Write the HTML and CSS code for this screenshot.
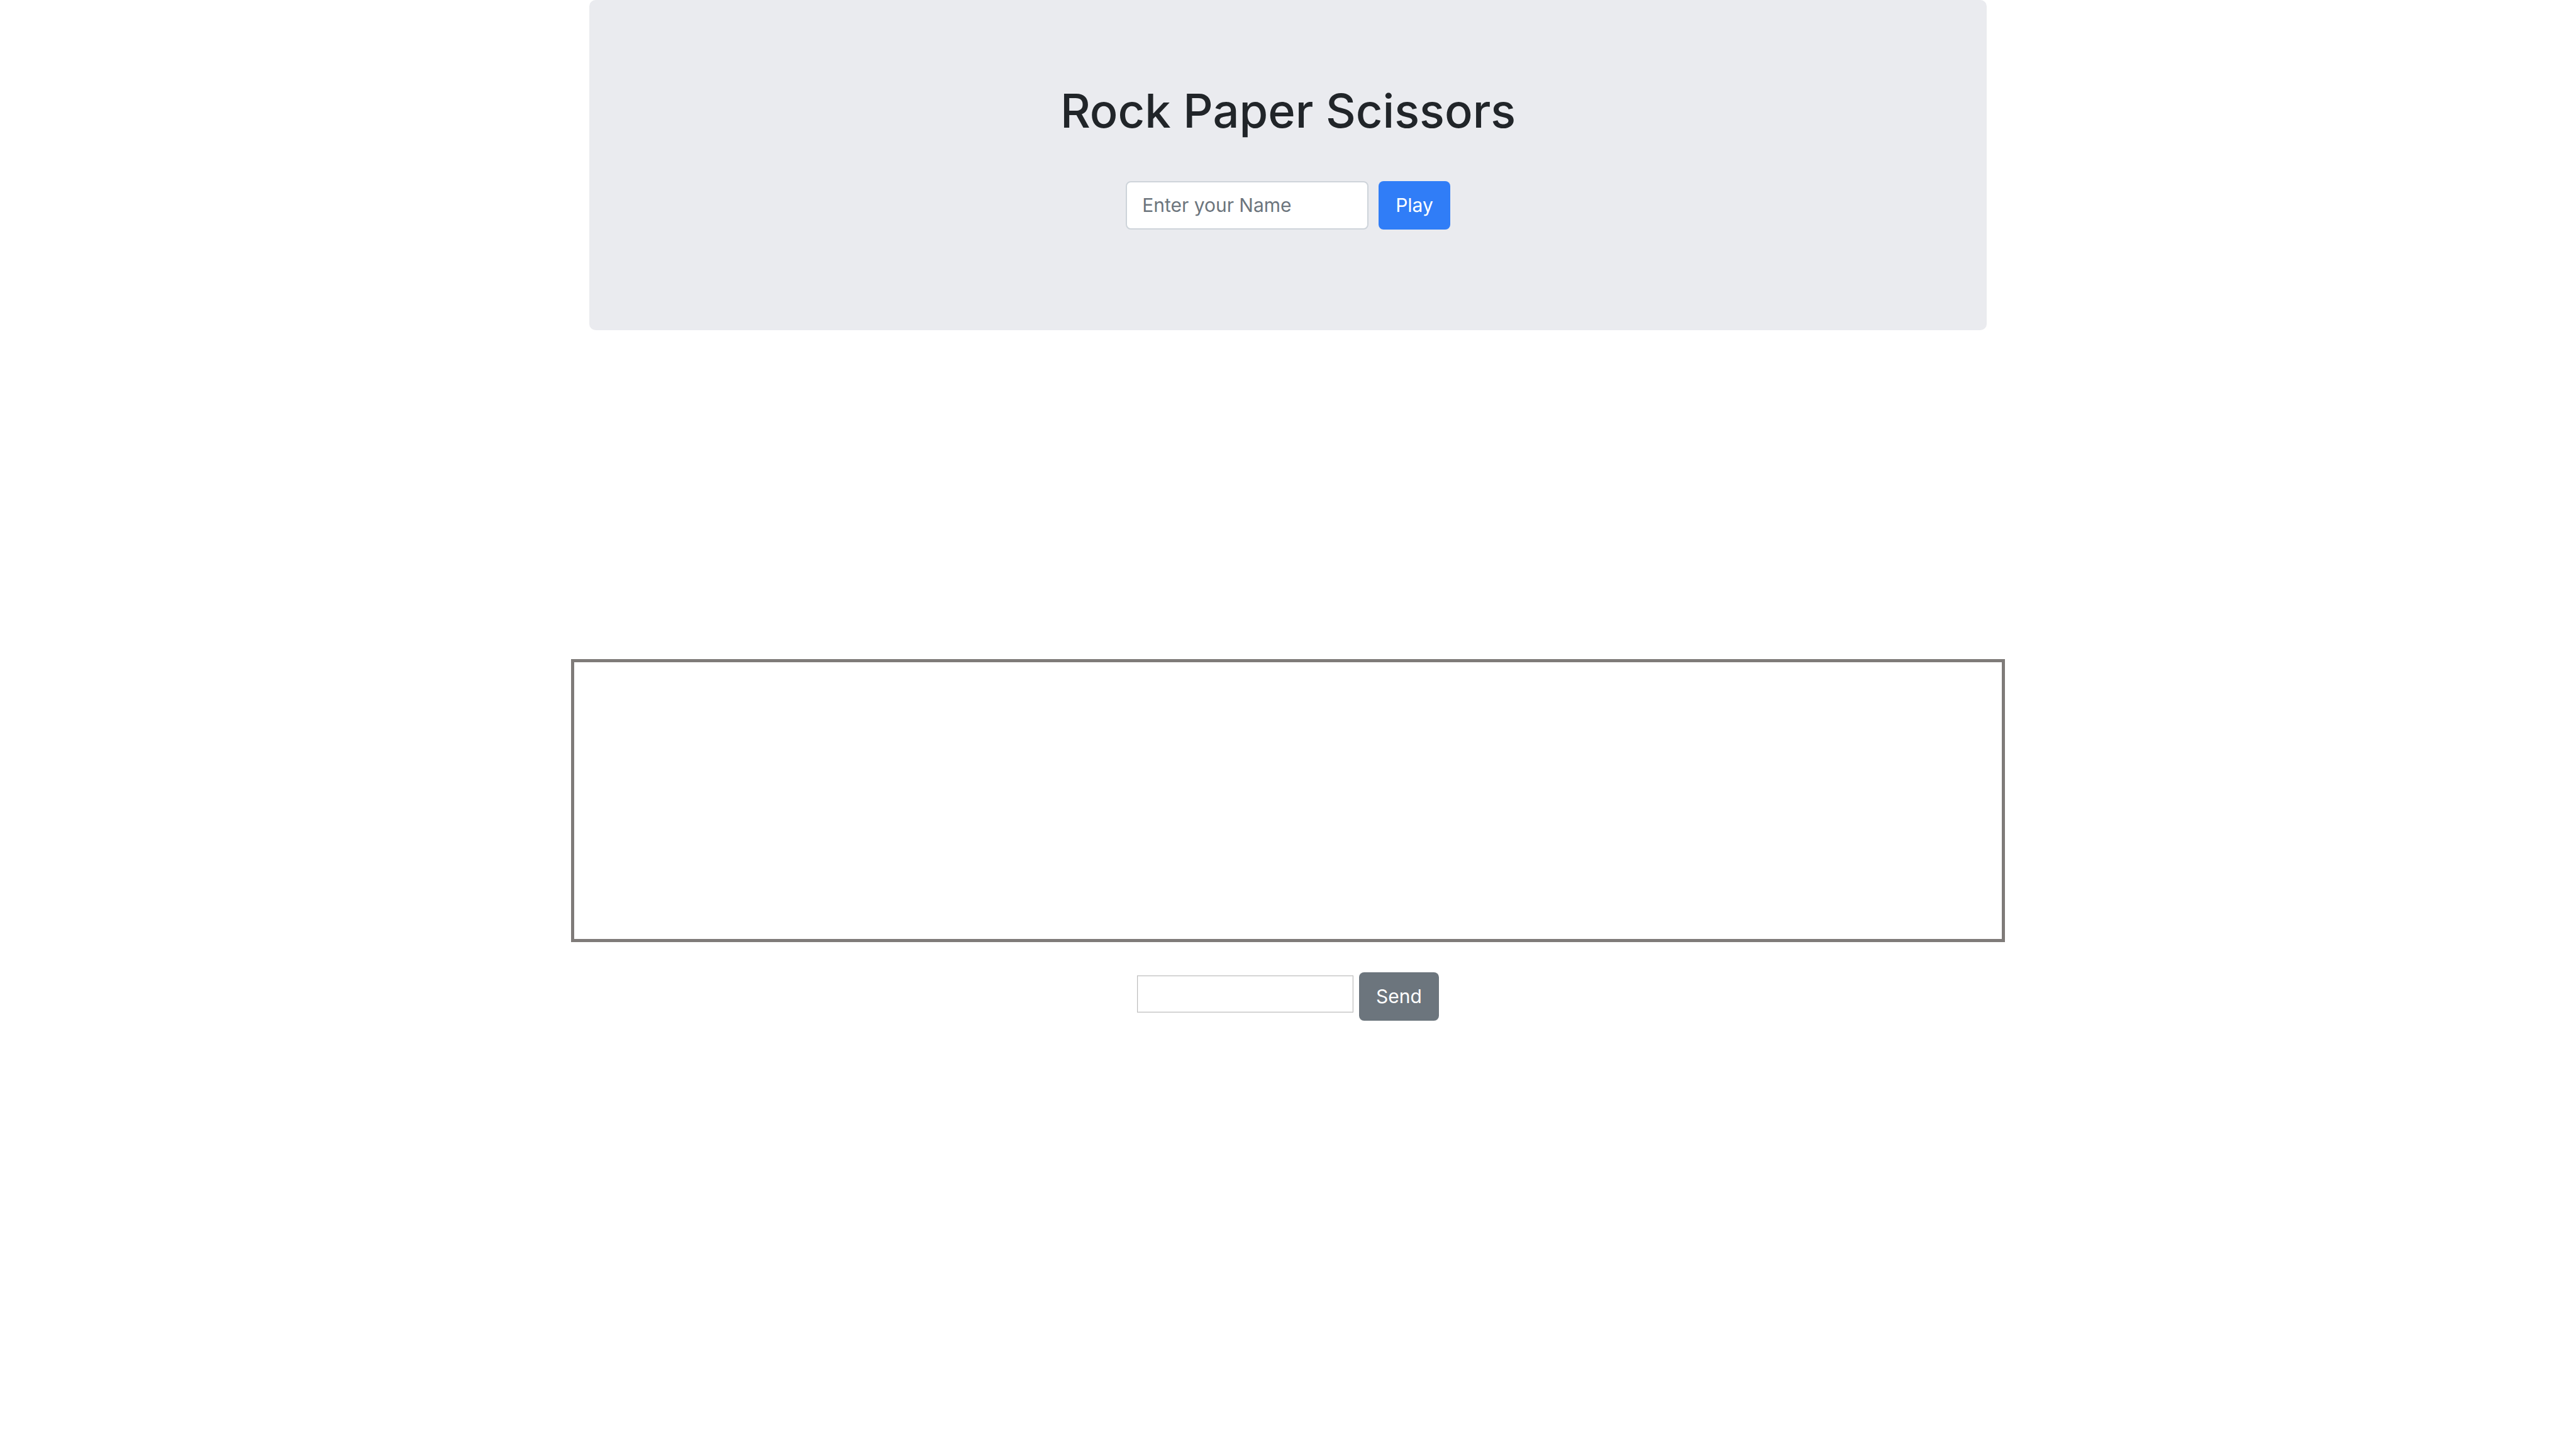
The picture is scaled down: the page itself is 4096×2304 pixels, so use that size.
FILE: index.html
```html
<!DOCTYPE html>
<html lang="en">
<head>
  <meta charset="utf-8">
  <meta name="viewport" content="width=device-width, initial-scale=1">
  <title>Rock Paper Scissors</title>
  <link rel="stylesheet" href="styles.css">
</head>
<body>
  <main class="container">
    <header class="jumbotron">
      <h1 class="title">Rock Paper Scissors</h1>
      <form class="join-form">
        <input class="name-input" type="text" placeholder="Enter your Name" aria-label="Enter your Name">
        <button class="btn btn-primary" type="button">Play</button>
      </form>
    </header>
  </main>
  <section class="chat" aria-label="Chat">
    <div class="messages" role="log"></div>
    <form class="chat-form">
      <input class="chat-input" type="text" aria-label="Message">
      <button class="btn btn-secondary" type="button">Send</button>
    </form>
  </section>
</body>
</html>
```

FILE: styles.css
```css
* {
  box-sizing: border-box;
}

body {
  margin: 0;
  background: #fff;
  color: #212529;
  font-family: Inter, "Liberation Sans", sans-serif;
  font-size: 30px;
  line-height: 49px;
}

.container,
.chat {
  width: 100%;
  max-width: 2280px;
  margin: 0 auto;
}

.container {
  padding: 0 29px;
}

.jumbotron {
  padding: 128px 64px 160px;
  border-radius: 10px;
  background: #eaebef;
  text-align: center;
}

.title {
  margin: 0 0 64px;
  font-size: 74px;
  font-weight: 500;
  line-height: 96px;
}

.join-form {
  display: flex;
  justify-content: center;
  gap: 16px;
}

.name-input,
.chat-input {
  font: inherit;
  color: #495057;
  background: #fff;
}

.name-input {
  width: 386px;
  padding: 12px 24px;
  border: 2px solid #ced4da;
  border-radius: 8px;
}

.name-input::placeholder {
  color: #6c757d;
  opacity: 1;
}

.btn {
  padding: 14px 27px;
  border: 0;
  border-radius: 8px;
  color: #fff;
  font: inherit;
}

.btn-primary {
  background: #307df7;
}

.btn-secondary {
  background: #6c757d;
}

.chat {
  padding-top: 523px;
}

.messages {
  min-height: 450px;
  border: 5px solid #7f7b79;
}

.chat-form {
  display: flex;
  align-items: flex-start;
  justify-content: center;
  gap: 9px;
  padding-top: 48px;
}

.chat-input {
  width: 344px;
  height: 59px;
  margin-top: 5px;
  padding: 4px;
  border: 1px solid #bdbdbd;
  border-radius: 0;
  box-shadow: inset 0 0 0 1px #f0f0f0;
}
```
